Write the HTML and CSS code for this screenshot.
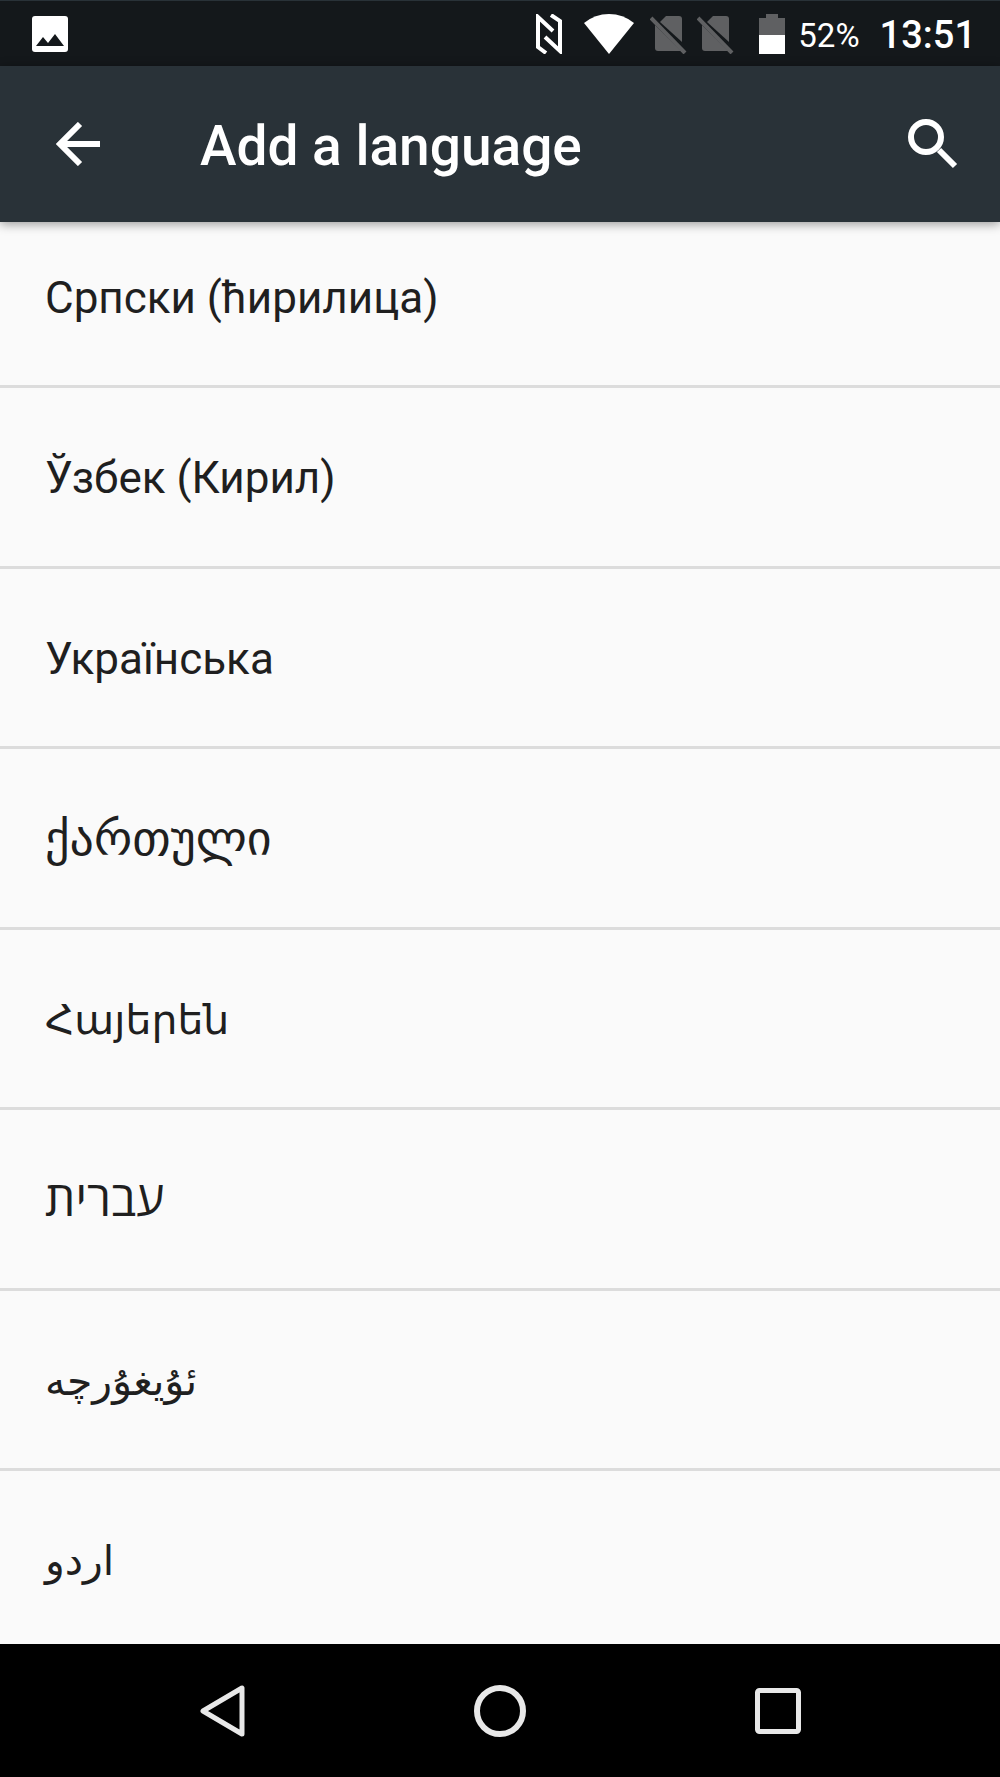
FILE: index.html
```html
<!DOCTYPE html>
<html lang="en">
<head>
  <meta charset="UTF-8">
  <meta name="viewport" content="width=device-width, initial-scale=1">
  <title>Add a language</title>
  <link rel="stylesheet" href="styles.css">
</head>
<body>
  <div class="status-bar">
    <svg class="picture" width="36" height="36" viewBox="0 0 36 36">
      <rect width="36" height="36" rx="3" fill="#fff"/>
      <path d="M4 30L11 21L16 27L23 18L32 30Z" fill="#14181b"/>
    </svg>
    <div class="status-icons">
      <svg class="nfc" width="26" height="40" viewBox="0 0 26 40" fill="none" stroke="#fff">
        <path d="M17 17L2 3V33L10 39" stroke-width="4"/>
        <path d="M9 23L24 37V7L15 1" stroke-width="4"/>
      </svg>
      <svg class="wifi" width="50" height="40" viewBox="0 0 50 40">
        <path d="M0 9Q11 0 25 0T50 9L25 40Z" fill="#fff"/>
      </svg>
      <svg class="sim" width="37" height="40" viewBox="0 0 37 40">
        <path d="M10 8L16 2H29Q32 2 32 5V28Z" fill="#5f6062"/>
        <path d="M5 11L31 37H8Q5 37 5 34Z" fill="#5f6062"/>
        <path d="M1 4L35 39" stroke="#5f6062" stroke-width="4"/>
      </svg>
      <svg class="sim" width="37" height="40" viewBox="0 0 37 40">
        <path d="M10 8L16 2H29Q32 2 32 5V28Z" fill="#5f6062"/>
        <path d="M5 11L31 37H8Q5 37 5 34Z" fill="#5f6062"/>
        <path d="M1 4L35 39" stroke="#5f6062" stroke-width="4"/>
      </svg>
      <svg class="battery" width="26" height="40" viewBox="0 0 26 40">
        <path d="M0 4H7V0H19V4H26V21H0Z" fill="#5f6062"/>
        <path d="M0 21H26V40H0Z" fill="#fff"/>
      </svg>
      <span class="percent">52%</span>
      <span class="clock">13:51</span>
    </div>
  </div>

  <header class="app-bar">
    <button class="icon-button" aria-label="Back">
      <svg width="44" height="44" viewBox="0 0 44 44" fill="none" stroke="#fff" stroke-width="6">
        <path d="M44 22H5M24 2L4 22L24 42"/>
      </svg>
    </button>
    <h1>Add a language</h1>
    <button class="icon-button" aria-label="Search">
      <svg width="50" height="50" viewBox="0 0 50 50" fill="none" stroke="#fff">
        <circle cx="18" cy="18" r="15" stroke-width="6"/>
        <path d="M31 31L47 47" stroke-width="6"/>
      </svg>
    </button>
  </header>

  <ul class="languages">
    <li><button lang="sr">Српски (ћирилица)</button></li>
    <li><button lang="uz">Ўзбек (Кирил)</button></li>
    <li><button lang="uk">Українська</button></li>
    <li><button lang="ka" class="large">ქართული</button></li>
    <li><button lang="hy" class="small">Հայերեն</button></li>
    <li><button lang="he" class="large">עברית</button></li>
    <li><button lang="ug" class="small">ئۇيغۇرچە</button></li>
    <li><button lang="ur" class="small">اردو</button></li>
  </ul>

  <nav class="nav-bar">
    <button aria-label="Back">
      <svg width="46" height="52" viewBox="0 0 46 52" fill="none" stroke="#e8e8e8" stroke-width="5" stroke-linejoin="round">
        <path d="M43 3V49L4 26Z"/>
      </svg>
    </button>
    <button aria-label="Home">
      <svg width="52" height="52" viewBox="0 0 52 52" fill="none" stroke="#e8e8e8" stroke-width="6">
        <circle cx="26" cy="26" r="23"/>
      </svg>
    </button>
    <button aria-label="Recent apps">
      <svg width="46" height="46" viewBox="0 0 46 46" fill="none" stroke="#e8e8e8" stroke-width="5">
        <rect x="2.5" y="2.5" width="41" height="41" rx="2"/>
      </svg>
    </button>
  </nav>
</body>
</html>
```
FILE: styles.css
```css
* {
  box-sizing: border-box;
}
body {
  margin: 0;
  min-height: 100vh;
  display: flex;
  flex-direction: column;
  background-color: #fafafa;
  color: #1f1f1f;
  font-family: Roboto, "Noto Sans", "Open Sans", "DejaVu Sans", sans-serif;
}
button {
  border: 0;
  padding: 0;
  background: none;
  color: inherit;
  font: inherit;
  cursor: pointer;
}
svg {
  display: block;
  flex: none;
}

/* status bar */
.status-bar {
  display: flex;
  align-items: center;
  justify-content: space-between;
  height: 66px;
  padding: 0 24px 0 32px;
  border-top: 1px solid #293238;
  background-color: #14181b;
  color: #fff;
}
.status-icons {
  display: flex;
  align-items: center;
}
.wifi {
  margin-left: 22px;
}
.sim {
  margin-left: 16px;
}
.sim + .sim {
  margin-left: 10px;
}
.battery {
  margin-left: 25px;
}
.percent,
.clock {
  padding-top: 3px;
}
.percent {
  margin-left: 13px;
  font-size: 33px;
}
.clock {
  margin-left: 20px;
  font-size: 38px;
  font-weight: 500;
}

/* title bar */
.app-bar {
  position: relative;
  display: flex;
  align-items: center;
  height: 156px;
  padding: 0 42px 0 56px;
  background-color: #293238;
  color: #fff;
  box-shadow: 0 2px 10px rgba(0, 0, 0, 0.4);
}
.app-bar h1 {
  flex: 1;
  margin: 0 0 0 100px;
  padding-top: 4px;
  font-size: 55px;
  font-weight: 500;
  line-height: 66px;
}

/* language list */
.languages {
  flex: 1;
  display: flex;
  flex-direction: column;
  margin: 0;
  padding: 0;
  list-style: none;
}
.languages li {
  flex: 1;
  display: flex;
  border-bottom: 3px solid #dcdcdc;
}
.languages li:first-child {
  flex: 0 0 166px;
}
.languages li:last-child {
  flex: 0 0 173px;
  border-bottom: 0;
}
.languages button {
  flex: 1;
  display: flex;
  align-items: flex-start;
  padding: 64px 45px 0;
  font-size: 44px;
  line-height: 52px;
}
.languages li:first-child button {
  padding-top: 50px;
}
.languages .large {
  font-size: 48px;
}
.languages .small {
  font-size: 41px;
}

/* navigation keys */
.nav-bar {
  display: flex;
  height: 133px;
  padding: 0 83px;
  background-color: #000;
}
.nav-bar button {
  flex: 1;
  display: flex;
  align-items: center;
  justify-content: center;
}
```
